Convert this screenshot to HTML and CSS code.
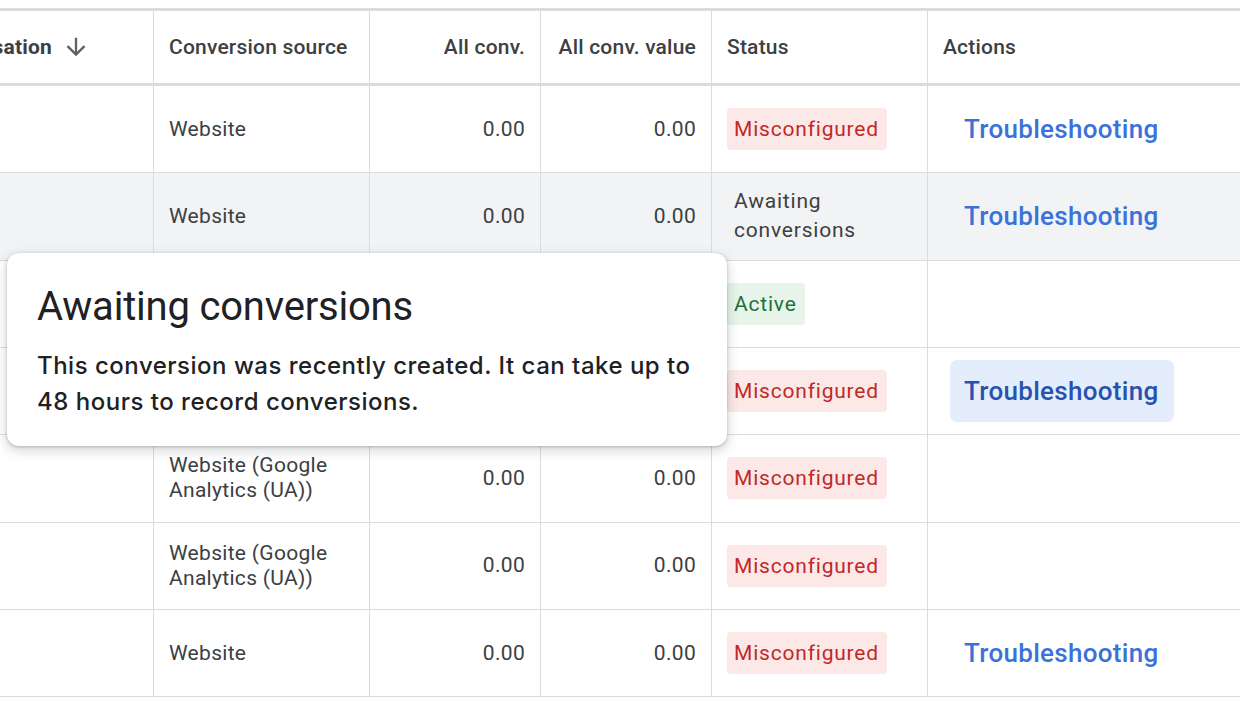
FILE: index.html
```html
<!DOCTYPE html>
<html lang="en">
<head>
  <meta charset="UTF-8">
  <meta name="viewport" content="width=device-width, initial-scale=1.0">
  <title>Conversions</title>
  <link rel="stylesheet" href="styles.css">
</head>
<body>
  <div class="page">
    <div class="conv-table">
      <div class="row head">
        <div class="cell sort-cell">
          <span class="sort-label">Action optimisation</span>
          <svg class="sort-arrow" width="28" height="28" viewBox="0 0 24 24"><path d="M20 12l-1.41-1.41L13 16.17V4h-2v12.17l-5.58-5.59L4 12l8 8 8-8z" fill="#5f6368"/></svg>
        </div>
        <div class="cell">Conversion source</div>
        <div class="cell num">All conv.</div>
        <div class="cell num">All conv. value</div>
        <div class="cell">Status</div>
        <div class="cell">Actions</div>
      </div>

      <div class="row">
        <div class="cell"></div>
        <div class="cell">Website</div>
        <div class="cell num">0.00</div>
        <div class="cell num">0.00</div>
        <div class="cell"><span class="chip bad">Misconfigured</span></div>
        <div class="cell action"><a class="link-btn" href="#">Troubleshooting</a></div>
      </div>

      <div class="row shaded">
        <div class="cell"></div>
        <div class="cell">Website</div>
        <div class="cell num">0.00</div>
        <div class="cell num">0.00</div>
        <div class="cell"><span class="plain-status">Awaiting conversions</span></div>
        <div class="cell action"><a class="link-btn" href="#">Troubleshooting</a></div>
      </div>

      <div class="row">
        <div class="cell"></div>
        <div class="cell">Website</div>
        <div class="cell num">0.00</div>
        <div class="cell num">0.00</div>
        <div class="cell"><span class="chip good">Active</span></div>
        <div class="cell action"></div>
      </div>

      <div class="row">
        <div class="cell"></div>
        <div class="cell">Website</div>
        <div class="cell num">0.00</div>
        <div class="cell num">0.00</div>
        <div class="cell"><span class="chip bad">Misconfigured</span></div>
        <div class="cell action"><a class="link-btn hover" href="#">Troubleshooting</a></div>
      </div>

      <div class="row">
        <div class="cell"></div>
        <div class="cell">Website (Google Analytics (UA))</div>
        <div class="cell num">0.00</div>
        <div class="cell num">0.00</div>
        <div class="cell"><span class="chip bad">Misconfigured</span></div>
        <div class="cell action"></div>
      </div>

      <div class="row">
        <div class="cell"></div>
        <div class="cell">Website (Google Analytics (UA))</div>
        <div class="cell num">0.00</div>
        <div class="cell num">0.00</div>
        <div class="cell"><span class="chip bad">Misconfigured</span></div>
        <div class="cell action"></div>
      </div>

      <div class="row">
        <div class="cell"></div>
        <div class="cell">Website</div>
        <div class="cell num">0.00</div>
        <div class="cell num">0.00</div>
        <div class="cell"><span class="chip bad">Misconfigured</span></div>
        <div class="cell action"><a class="link-btn" href="#">Troubleshooting</a></div>
      </div>
    </div>

    <!-- status tooltip, sits over the table -->
    <div class="tooltip">
      <div class="tooltip-title">Awaiting conversions</div>
      <p class="tooltip-text">This conversion was recently created. It can take up to 48 hours to record conversions.</p>
    </div>
  </div>
</body>
</html>
```

FILE: styles.css
```css
body {
  margin: 0;
  background: #fff;
  font-family: Roboto, "Liberation Sans", Arial, sans-serif;
  color: #3c4043;
}

.page {
  position: relative;
  padding-top: 8px;
  width: 1240px;
  height: 702px;
  overflow: hidden;
}

.conv-table {
  border-top: 3px solid #dadce0;
}

.row {
  display: grid;
  grid-template-columns: 154px 216px 171px 171px 216px 1fr;
  height: 87.33px;
  border-bottom: 1px solid #dadce0;
  box-sizing: border-box;
  font-size: 21px;
  letter-spacing: 0.3px;
}

.row.head {
  height: 75px;
  border-bottom: 3px solid #dadce0;
  font-size: 21px;
  font-weight: 500;
  letter-spacing: 0.2px;
}

.row.shaded {
  background: #f1f3f4;
}

.cell {
  display: flex;
  align-items: center;
  padding: 0 15px;
  border-right: 1px solid #dadce0;
  line-height: 25px;
  min-width: 0;
}

.cell:last-child {
  border-right: none;
}

.cell.num {
  justify-content: flex-end;
}

/* first column is scrolled, only the tail of its header shows */
.sort-cell {
  justify-content: flex-end;
  overflow: hidden;
  white-space: nowrap;
  padding-right: 63px;
  font-weight: 700;
}

.sort-arrow {
  flex: none;
  margin-left: 10px;
}

.chip {
  display: inline-block;
  padding: 8px 8px 8px 7px;
  border-radius: 4px;
  line-height: 26px;
  letter-spacing: 0.8px;
}

.chip.bad {
  background: #fce8e6;
  color: #c0282a;
}

.chip.good {
  background: #e6f4ea;
  color: #23703a;
}

.plain-status {
  padding-left: 7px;
  line-height: 29px;
  letter-spacing: 0.8px;
  width: 160px;
}

.cell.action {
  padding-left: 22px;
}

.link-btn {
  display: inline-block;
  padding: 17px 15px 17px 14px;
  border-radius: 7px;
  color: #3a72d8;
  text-decoration: none;
  font-size: 26px;
  font-weight: 500;
  line-height: 28px;
  letter-spacing: 0.3px;
}

.link-btn.hover {
  background: #e4edfc;
  color: #2852b0;
}

.tooltip {
  position: absolute;
  left: 7px;
  top: 253px;
  width: 720px;
  height: 193px;
  box-sizing: border-box;
  padding: 31px 30px 0;
  background: #fff;
  border-radius: 12px;
  box-shadow: 0 1px 3px rgba(60, 64, 67, 0.3), 0 4px 10px 3px rgba(60, 64, 67, 0.15);
  color: #202124;
}

.tooltip-title {
  font-size: 40px;
  line-height: 46px;
  letter-spacing: -0.2px;
}

.tooltip-text {
  margin: 18px 0 0;
  font-family: Inter, Roboto, sans-serif;
  font-size: 24px;
  font-weight: 500;
  line-height: 36px;
  letter-spacing: 0.5px;
}
```
